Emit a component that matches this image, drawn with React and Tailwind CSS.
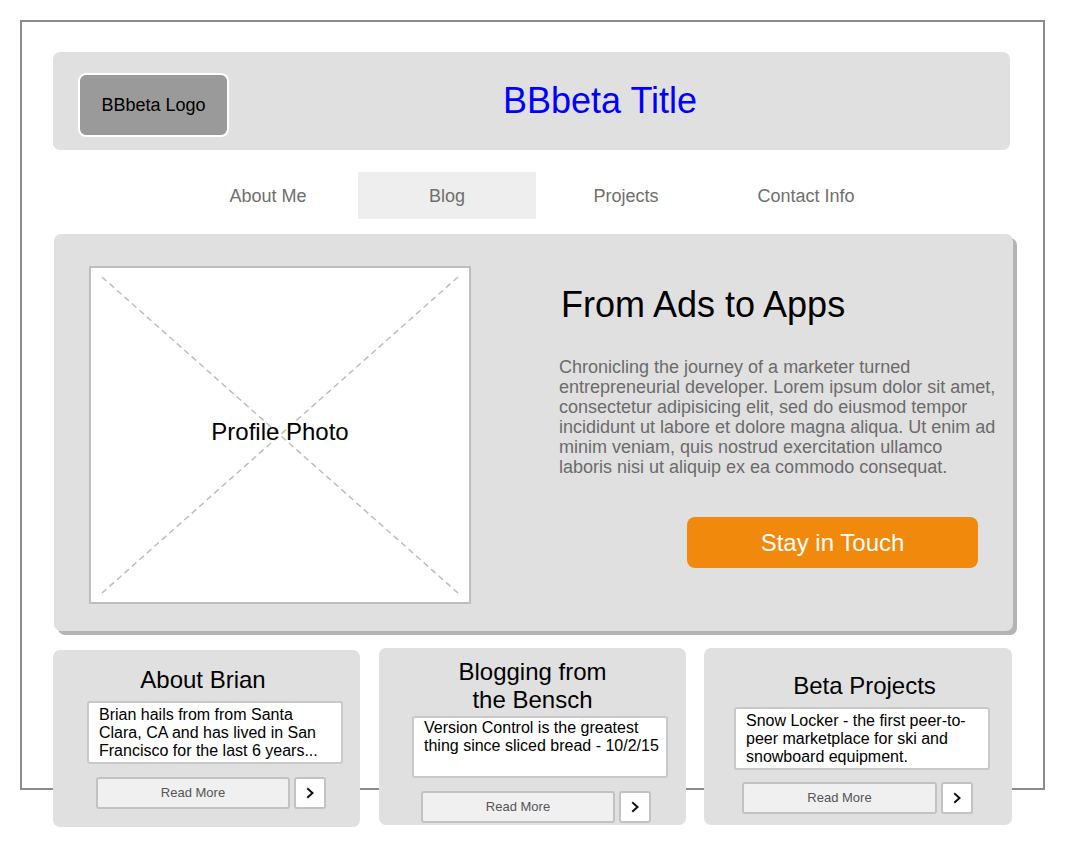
import React from "react";

const Chevron = () => (
  <svg width="12" height="14" viewBox="0 0 12 14" fill="none">
    <polyline points="4,3 8.5,7 4,11" stroke="#111" strokeWidth="2" strokeLinecap="square" />
  </svg>
);

const ButtonRow = ({ ml, w }) => (
  <div className={`flex items-center gap-[4px] ${ml}`}>
    <div className={`${w} h-[32px] rounded-[3px] border-2 border-[#c2c2c2] bg-[#f0f0f0] flex items-center justify-center text-[13px] text-[#555]`}>
      Read More
    </div>
    <div className="w-[32px] h-[32px] rounded-[3px] border-2 border-[#c2c2c2] bg-white flex items-center justify-center">
      <Chevron />
    </div>
  </div>
);

export default function App() {
  return (
    <div
      className="w-[1065px] h-[848px] bg-white pt-[20px] pl-[20px] overflow-hidden"
      style={{ fontFamily: '"Liberation Sans", Arial, sans-serif' }}
    >
      <div className="w-[1025px] h-[770px] border-2 border-[#8c8c8c] pt-[30px] pl-[31px]">
        {/* Header */}
        <div className="w-[957px] h-[98px] rounded-[7px] bg-[#e0e0e0] flex items-center pl-[25px]">
          <div className="w-[151px] h-[64px] mt-[8px] rounded-[8px] border-2 border-white bg-[#9a9a9a] flex items-center justify-center text-[18px] text-black">
            BBbeta Logo
          </div>
          <div className="ml-[274px] text-[36px] leading-[40px] text-[#0000ff]">BBbeta Title</div>
        </div>

        {/* Nav */}
        <div className="mt-[22px] ml-[125px] flex h-[47px] text-[18px] text-[#6e6e6e]">
          <div className="w-[180px] flex items-center justify-center pt-[1px]">About Me</div>
          <div className="w-[178px] flex items-center justify-center pt-[1px] bg-[#eeeeee]">Blog</div>
          <div className="w-[180px] flex items-center justify-center pt-[1px]">Projects</div>
          <div className="w-[180px] flex items-center justify-center pt-[1px]">Contact Info</div>
        </div>

        {/* Hero */}
        <div className="mt-[15px] ml-[1px] w-[959px] h-[397px] rounded-[7px] bg-[#e0e0e0] shadow-[4px_4px_0_#b4b4b4] flex pt-[32px] pl-[35px]">
          <div className="relative w-[382px] h-[338px] border-2 border-[#bdbdbd] bg-white flex items-center justify-center">
            <svg className="absolute inset-0" width="378" height="334" viewBox="0 0 378 334">
              <line x1="11" y1="9" x2="367" y2="325" stroke="#bdbdbd" strokeWidth="1.5" strokeDasharray="6 4" />
              <line x1="367" y1="9" x2="11" y2="325" stroke="#bdbdbd" strokeWidth="1.5" strokeDasharray="6 4" />
            </svg>
            <span className="relative text-[24px] text-black mb-[6px]">Profile Photo</span>
          </div>
          <div className="ml-[88px] pt-[18px] flex flex-col">
            <div className="text-[36px] leading-[42px] text-black ml-[2px]">From Ads to Apps</div>
            <p className="mt-[31px] w-[441px] text-[18px] leading-[20px] text-[#6b6b6b]">
              Chronicling the journey of a marketer turned entrepreneurial developer. Lorem ipsum dolor sit amet,
              consectetur adipisicing elit, sed do eiusmod tempor incididunt ut labore et dolore magna aliqua. Ut
              enim ad minim veniam, quis nostrud exercitation ullamco laboris nisi ut aliquip ex ea commodo consequat.
            </p>
            <div className="mt-[40px] ml-[128px] w-[291px] h-[51px] rounded-[8px] bg-[#f0890c] flex items-center justify-center text-[24px] text-white">
              Stay in Touch
            </div>
          </div>
        </div>

        {/* Cards */}
        <div className="mt-[17px] flex items-start text-black">
          <div className="mt-[2px] w-[307px] h-[177px] rounded-[7px] bg-[#e0e0e0] pt-[16px]">
            <div className="text-center text-[24px] leading-[28px] pr-[7px]">About Brian</div>
            <div className="mt-[7px] ml-[34px] w-[256px] h-[63px] rounded-[3px] border-2 border-[#c8c8c8] bg-white pl-[10px] pr-[4px] pt-[3px] text-[16px] leading-[18px]">
              Brian hails from from Santa Clara, CA and has lived in San Francisco for the last 6 years...
            </div>
            <div className="mt-[13px]">
              <ButtonRow ml="ml-[43px]" w="w-[194px]" />
            </div>
          </div>

          <div className="ml-[19px] w-[307px] h-[177px] rounded-[7px] bg-[#e0e0e0] pt-[10px]">
            <div className="text-center text-[24px] leading-[28px]">
              Blogging from
              <br />
              the Bensch
            </div>
            <div className="mt-[2px] ml-[33px] w-[256px] h-[62px] rounded-[3px] border-2 border-[#c8c8c8] bg-white pl-[10px] pr-[2px] pt-[1px] text-[16px] leading-[18px]">
              Version Control is the greatest thing since sliced bread - 10/2/15
            </div>
            <div className="mt-[13px]">
              <ButtonRow ml="ml-[42px]" w="w-[194px]" />
            </div>
          </div>

          <div className="ml-[18px] w-[308px] h-[177px] rounded-[7px] bg-[#e0e0e0] pt-[24px]">
            <div className="text-center text-[24px] leading-[28px] pl-[13px]">Beta Projects</div>
            <div className="mt-[7px] ml-[30px] w-[256px] h-[63px] rounded-[3px] border-2 border-[#c8c8c8] bg-white pl-[10px] pr-[4px] pt-[3px] text-[16px] leading-[18px]">
              Snow Locker - the first peer-to-peer marketplace for ski and snowboard equipment.
            </div>
            <div className="mt-[12px]">
              <ButtonRow ml="ml-[38px]" w="w-[195px]" />
            </div>
          </div>
        </div>
      </div>
    </div>
  );
}
